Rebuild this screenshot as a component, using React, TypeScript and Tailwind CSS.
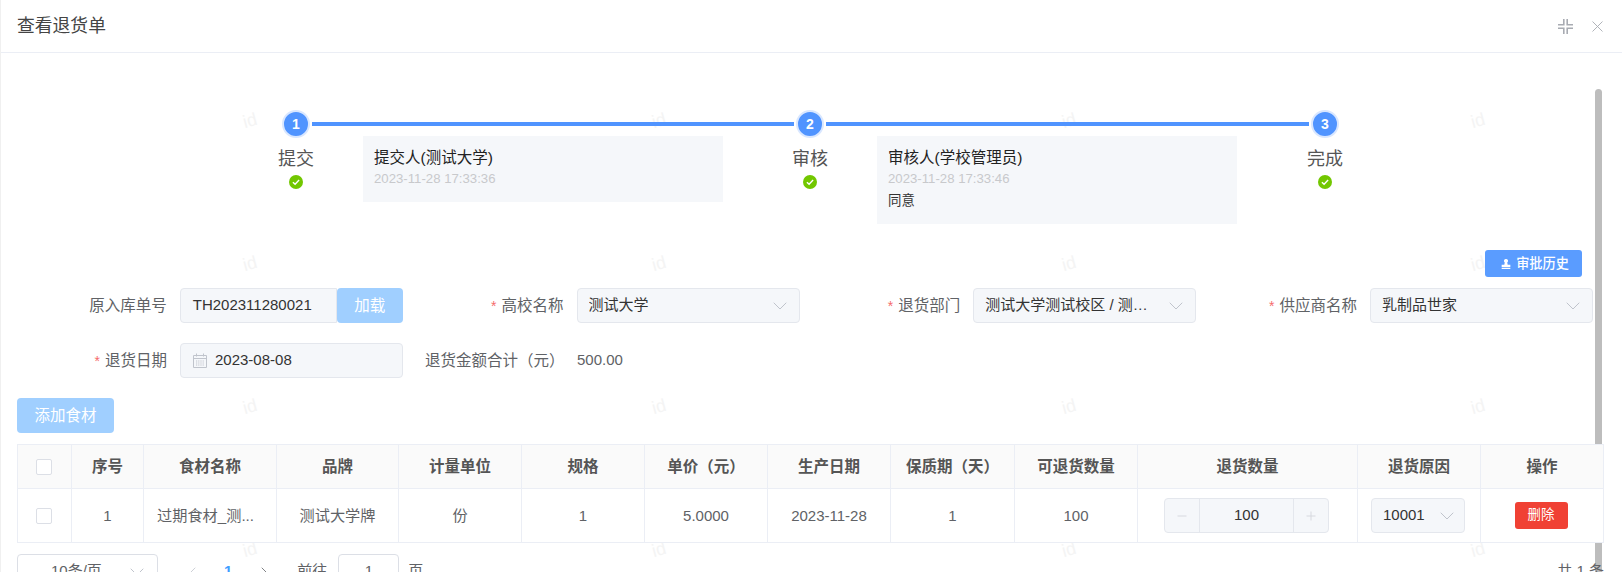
import { ChevronDown, ChevronLeft, ChevronRight, Minus, Plus } from 'lucide-react';

const columns = [54, 72, 133, 122, 123, 123, 123, 123, 124, 123, 220, 123, 123];
const headers = ['序号', '食材名称', '品牌', '计量单位', '规格', '单价（元）', '生产日期', '保质期（天）', '可退货数量', '退货数量', '退货原因', '操作'];
const cells = ['1', '过期食材_测...', '测试大学牌', '份', '1', '5.0000', '2023-11-28', '1', '100'];
const watermarkX = [249, 658, 1068, 1477];
const watermarkY = [121, 264, 407, 550];

function Chevron() {
  return <ChevronDown className="w-[24px] h-[24px] text-[#c0c4cc] shrink-0" strokeWidth={1} />;
}

function Check() {
  return (
    <svg viewBox="0 0 14 14" className="w-[14px] h-[14px]">
      <circle cx="7" cy="7" r="7" fill="#72c700" />
      <path d="M3.9 7.2l2.2 2.1 4-4.2" fill="none" stroke="#fff" strokeWidth="1.4" />
    </svg>
  );
}

function Step({ n, label }: { n: number; label: string }) {
  return (
    <div className="w-[72px] shrink-0 flex flex-col items-center">
      <div className="w-[28px] h-[28px] rounded-full bg-[#5094ff] border-2 border-[#d9e7ff] flex items-center justify-center text-white text-[14px] font-bold">
        {n}
      </div>
      <div className="mt-[9px] text-[18px] leading-[24px] text-[#555]">{label}</div>
      <div className="mt-[4px] h-[14px]"><Check /></div>
    </div>
  );
}

function Field({ label, required, children }: { label: string; required?: boolean; children: React.ReactNode }) {
  return (
    <div className="flex items-center justify-end">
      <label className="pr-[13px] text-[15.5px] text-[#606266] whitespace-nowrap">
        {required && <span className="text-[#f56c6c] mr-[5px] text-[14px]">*</span>}
        {label}
      </label>
      <div className="w-[223px] shrink-0 flex">{children}</div>
    </div>
  );
}

function SelectBox({ value }: { value: string }) {
  return (
    <div className="w-full h-[35px] flex items-center justify-between pl-[11px] pr-[7px] bg-[#f5f7fa] border border-[#e4e7ed] rounded-[4px] text-[15px] text-[#333]">
      <span className="truncate mr-[14px]">{value}</span>
      <Chevron />
    </div>
  );
}

export default function App() {
  return (
    <div className="relative w-[1622px] h-[572px] overflow-hidden bg-white border-l border-[#f0f0f0] font-['Liberation_Sans','Noto_Sans_CJK_SC',sans-serif]">
      {watermarkX.map((x) =>
        watermarkY.map((y) => (
          <span
            key={`${x}-${y}`}
            className="absolute text-[18px] text-[#f4f4f4] -rotate-[15deg] -translate-x-1/2 -translate-y-1/2"
            style={{ left: x, top: y }}
          >
            id
          </span>
        )),
      )}
      <div className="absolute left-[1594px] top-[89px] w-[7px] h-[483px] bg-[#bdbdbd] rounded-t-[4px]" />

      <div className="relative h-[53px] flex items-center justify-between pl-[16px] pr-[19px] border-b border-[#ebeef5]">
        <h1 className="text-[17.8px] text-[#444]">查看退货单</h1>
        <div className="flex items-center gap-[19px] text-[#a8abb2]">
          <svg viewBox="0 0 15 15" className="w-[15px] h-[15px]" fill="none" stroke="currentColor" strokeWidth="1.6">
            <path d="M5.8 0v5.8H0M9.2 0v5.8H15M5.8 15V9.2H0M9.2 15V9.2H15" />
          </svg>
          <svg viewBox="0 0 11 11" className="w-[11px] h-[11px]" fill="none" stroke="currentColor" strokeWidth="0.9">
            <path d="M.5.5l10 10M10.5.5l-10 10" />
          </svg>
        </div>
      </div>

      <div className="relative pt-[57px] pl-[16px]">
        <div className="flex ml-[243px]">
          <Step n={1} label="提交" />
          <div className="w-[442px] shrink-0">
            <div className="h-[4px] -mx-[20px] mt-[12px] bg-[#5094ff]" />
            <div className="ml-[31px] mt-[10px] w-[360px] h-[66px] bg-[#f5f7fa] pl-[11px] pt-[12px]">
              <p className="text-[15.5px] leading-[20px] text-[#222]">提交人(测试大学)</p>
              <p className="text-[13.2px] leading-[20px] mt-[1px] text-[#c8c9cc]">2023-11-28 17:33:36</p>
            </div>
          </div>
          <Step n={2} label="审核" />
          <div className="w-[443px] shrink-0">
            <div className="h-[4px] -mx-[20px] mt-[12px] bg-[#5094ff]" />
            <div className="ml-[31px] mt-[10px] w-[360px] h-[88px] bg-[#f5f7fa] pl-[11px] pt-[12px]">
              <p className="text-[15.5px] leading-[20px] text-[#222]">审核人(学校管理员)</p>
              <p className="text-[13.2px] leading-[20px] mt-[1px] text-[#c8c9cc]">2023-11-28 17:33:46</p>
              <p className="text-[13.4px] leading-[20px] mt-[2px] text-[#333]">同意</p>
            </div>
          </div>
          <Step n={3} label="完成" />
        </div>

        <div className="flex justify-end mt-[26px] pr-[40px]">
          <button className="w-[97px] h-[27px] flex items-center justify-center gap-[5px] pl-[3px] bg-[#5a9cff] rounded-[3px] text-white text-[13.2px] font-medium">
            <svg viewBox="0 0 12 12" className="w-[10px] h-[10px]" fill="currentColor">
              <path d="M6 0a2.4 2.4 0 0 1 1.5 4.3L8 7h3.2v2.6H.8V7H4l.5-2.7A2.4 2.4 0 0 1 6 0zM.8 10.6h10.4V12H.8z" />
            </svg>
            审批历史
          </button>
        </div>

        <div className="grid grid-cols-4 w-[1587px] -ml-[11px] mt-[11px]">
          <Field label="原入库单号">
            <div className="w-[157px] h-[35px] flex items-center pl-[12px] bg-[#f5f7fa] border border-[#e4e7ed] rounded-l-[4px] text-[15px] text-[#333]">
              TH202311280021
            </div>
            <button className="w-[66px] h-[35px] bg-[#a0cfff] rounded-[4px] text-white text-[15.5px]">加载</button>
          </Field>
          <Field label="高校名称" required><SelectBox value="测试大学" /></Field>
          <Field label="退货部门" required><SelectBox value="测试大学测试校区 / 测试食堂" /></Field>
          <Field label="供应商名称" required><SelectBox value="乳制品世家" /></Field>
        </div>

        <div className="flex items-center w-[1587px] -ml-[11px] mt-[20px]">
          <div className="w-[397px] shrink-0">
            <Field label="退货日期" required>
              <div className="w-full h-[35px] flex items-center gap-[8px] pl-[12px] bg-[#f5f7fa] border border-[#e4e7ed] rounded-[4px] text-[15px] text-[#333]">
                <svg viewBox="0 0 14 15" className="w-[14px] h-[15px] text-[#c0c4cc]" fill="none" stroke="currentColor" strokeWidth="1">
                  <path d="M.5 2.5h13v12H.5zM.5 5.5h13M3.5 .5v3M10.5 .5v3" />
                  <path d="M3 8h8M3 10h8M3 12h8" strokeDasharray="1.2 1" />
                </svg>
                2023-08-08
              </div>
            </Field>
          </div>
          <span className="ml-[22px] w-[152px] text-[15.5px] text-[#606266] whitespace-nowrap">退货金额合计（元）</span>
          <span className="text-[15px] text-[#606266]">500.00</span>
        </div>

        <button className="block mt-[20px] w-[97px] h-[35px] bg-[#a0cfff] rounded-[4px] text-white text-[15.5px]">添加食材</button>

        <table className="relative mt-[11px] w-[1587px] table-fixed border-collapse bg-white text-[15px] text-[#606266]">
          <colgroup>
            {columns.map((w, i) => <col key={i} style={{ width: w }} />)}
          </colgroup>
          <thead>
            <tr className="h-[44px] bg-[#fafafa]">
              <th className="border border-[#ebeef5] pr-[2px]">
                <span className="block mx-auto w-[16px] h-[16px] bg-white border border-[#dcdfe6] rounded-[2px]" />
              </th>
              {headers.map((h) => (
                <th key={h} className="border border-[#ebeef5] font-bold text-[15.5px] text-[#555] whitespace-nowrap">{h}</th>
              ))}
            </tr>
          </thead>
          <tbody>
            <tr className="h-[54px] text-center">
              <td className="border border-[#ebeef5] pr-[2px]">
                <span className="block mx-auto w-[16px] h-[16px] bg-white border border-[#dcdfe6] rounded-[2px]" />
              </td>
              {cells.map((c, i) => (
                <td
                  key={i}
                  className={`border border-[#ebeef5] pt-[2px] whitespace-nowrap ${i === 1 ? 'text-left pl-[13px] text-[15.2px]' : i === 2 || i === 3 ? 'text-[15.2px]' : ''}`}
                >
                  {c}
                </td>
              ))}
              <td className="border border-[#ebeef5] pr-[2px]">
                <div className="mx-auto w-[165px] h-[35px] flex bg-[#f5f7fa] border border-[#e4e7ed] rounded-[4px] text-[#333]">
                  <span className="w-[35px] flex items-center justify-center border-r border-[#e4e7ed] text-[#d3d6dc]"><Minus className="w-[14px] h-[14px]" strokeWidth={1.5} /></span>
                  <span className="flex-1 flex items-center justify-center">100</span>
                  <span className="w-[35px] flex items-center justify-center border-l border-[#e4e7ed] text-[#d3d6dc]"><Plus className="w-[14px] h-[14px]" strokeWidth={1.5} /></span>
                </div>
              </td>
              <td className="border border-[#ebeef5] pr-[2px]">
                <div className="mx-auto w-[94px] h-[35px] flex items-center justify-between pl-[11px] pr-[5px] bg-[#f5f7fa] border border-[#e4e7ed] rounded-[4px] text-[#333]">
                  10001
                  <Chevron />
                </div>
              </td>
              <td className="border border-[#ebeef5] pr-[2px]">
                <button className="w-[53px] h-[27px] bg-[#f04134] rounded-[3px] text-white text-[13.4px]">删除</button>
              </td>
            </tr>
          </tbody>
        </table>

        <div className="relative flex items-center mt-[11px] w-[1587px] h-[35px] text-[15px] text-[#606266]">
          <div className="w-[141px] h-[35px] flex items-center justify-between pl-[33px] pr-[8px] border border-[#dcdfe6] rounded-[4px]">
            10条/页
            <Chevron />
          </div>
          <ChevronLeft className="ml-[27px] w-[16px] h-[16px] text-[#c0c4cc]" strokeWidth={1.2} />
          <span className="ml-[23px] font-bold text-[#409eff]">1</span>
          <ChevronRight className="ml-[24px] w-[16px] h-[16px] text-[#606266]" strokeWidth={1.2} />
          <span className="ml-[25px]">前往</span>
          <div className="ml-[11px] w-[61px] h-[35px] flex items-center justify-center border border-[#dcdfe6] rounded-[4px]">1</div>
          <span className="ml-[9px]">页</span>
          <span className="ml-auto">共 1 条</span>
        </div>
      </div>
    </div>
  );
}
